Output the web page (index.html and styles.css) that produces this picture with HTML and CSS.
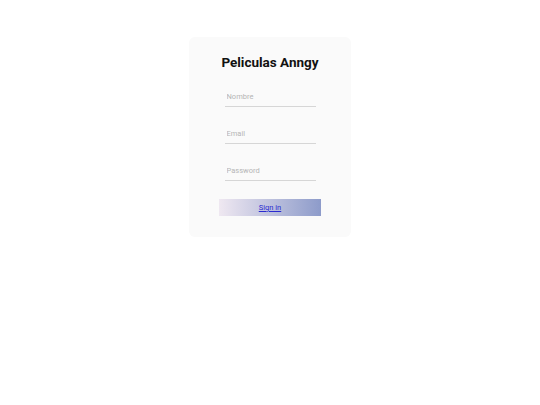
FILE: index.html
```html
<!DOCTYPE html>
<html>
<head>
<meta charset="utf-8">
<link rel="stylesheet" href="styles.css">
</head>
<body>
<div class="page">
  <form class="card">
    <h1 class="title">Peliculas Anngy</h1>
    <div class="fields">
      <input class="field" type="text" placeholder="Nombre">
      <input class="field" type="email" placeholder="Email">
      <input class="field" type="password" placeholder="Password">
    </div>
    <div class="btn"><a href="#">Sign in</a></div>
  </form>
</div>
</body>
</html>
```
FILE: styles.css
```css
html, body { margin: 0; padding: 0; background: #fff; }
body { font-family: Roboto, "Liberation Sans", sans-serif; }
.page { display: flex; justify-content: center; padding-top: 37px; }
.card {
  width: 162px;
  height: 200px;
  box-sizing: border-box;
  background: #fafafa;
  border-radius: 6px;
  display: flex;
  flex-direction: column;
  align-items: center;
  padding-top: 16px;
}
.title { margin: 0; font-size: 13.5px; font-weight: 700; color: #111; line-height: 18px; }
.fields { display: flex; flex-direction: column; gap: 17px; margin-top: 16px; }
.field {
  width: 91px; height: 20px; box-sizing: border-box;
  border: none; border-bottom: 1px solid #d6d6d6; background: transparent;
  font-family: Roboto, sans-serif; font-size: 7.5px; padding: 0 2px; outline: none;
}
.field::placeholder { color: #b5b5b5; }
.btn {
  margin-top: 18px; width: 102px; height: 17px;
  background: linear-gradient(to right, #efe8f1, #8d9bca);
  display: flex; align-items: center; justify-content: center;
}
.btn a { font-size: 7.5px; color: #2a2ad0; text-decoration: underline; }
```
